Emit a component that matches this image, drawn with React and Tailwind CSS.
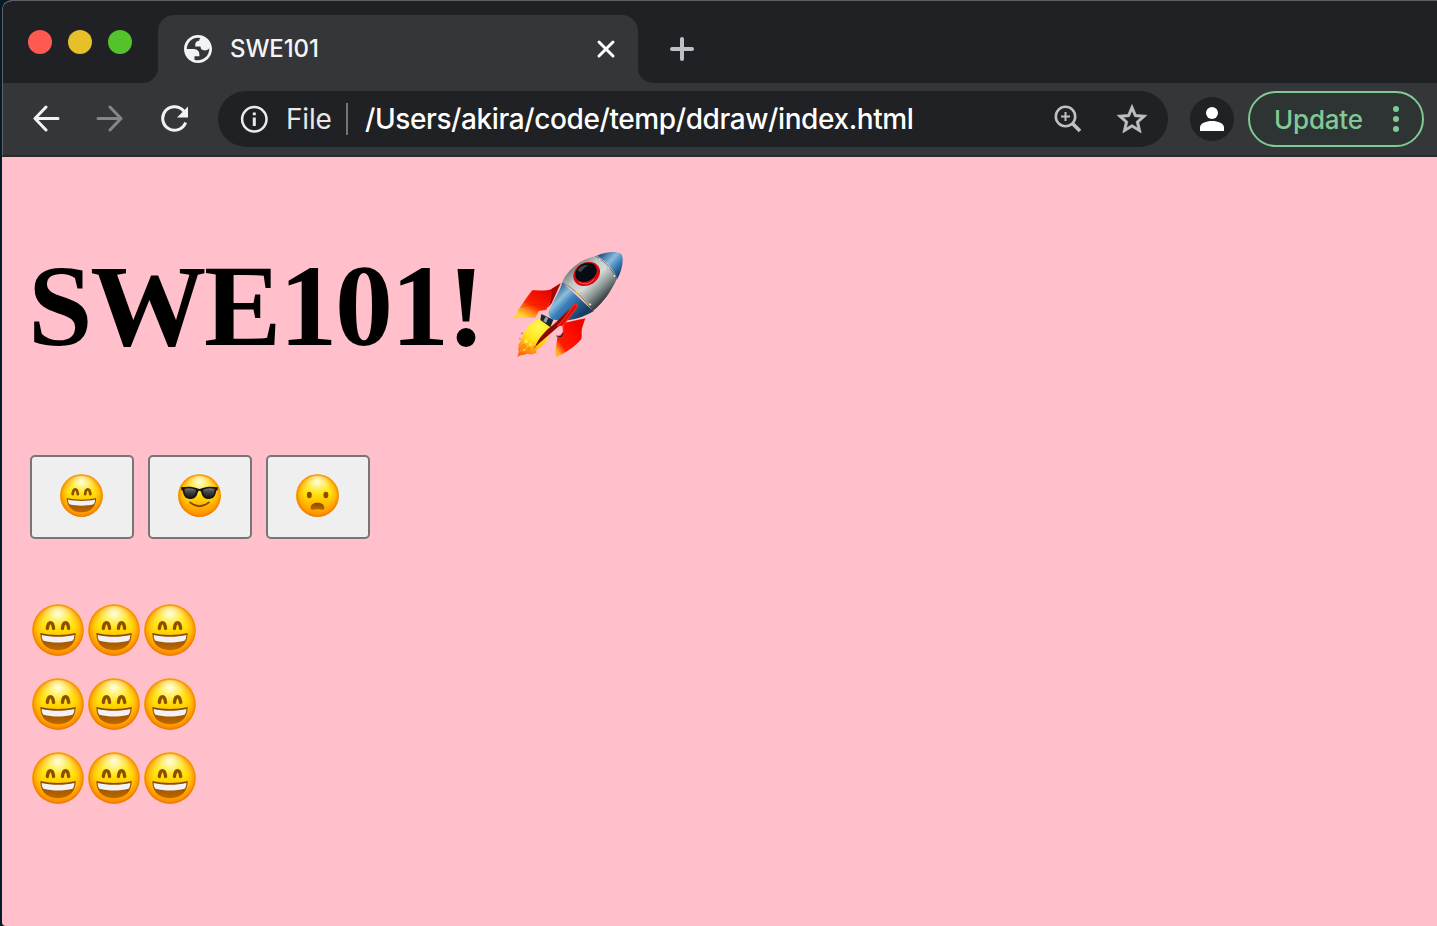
import React from "react";

function GradientDefs() {
  return (
    <svg className="absolute h-0 w-0" aria-hidden="true">
      <defs>
        <linearGradient id="skin" x1="0" y1="0" x2="0" y2="1">
          <stop offset="0" stopColor="#fff06a" />
          <stop offset="0.2" stopColor="#ffec3a" />
          <stop offset="0.45" stopColor="#ffe208" />
          <stop offset="0.75" stopColor="#ffb400" />
          <stop offset="1" stopColor="#ff9100" />
        </linearGradient>
        <radialGradient id="rim" cx="0.5" cy="0.49" r="0.51">
          <stop offset="0.6" stopColor="#ffa000" stopOpacity="0" />
          <stop offset="0.8" stopColor="#ff9a00" stopOpacity="0.45" />
          <stop offset="0.92" stopColor="#f98b00" stopOpacity="0.85" />
          <stop offset="1" stopColor="#e87000" stopOpacity="1" />
        </radialGradient>
        <radialGradient id="shine" cx="0.5" cy="0.16" r="0.34">
          <stop offset="0" stopColor="#fffff0" stopOpacity="0.95" />
          <stop offset="1" stopColor="#fff780" stopOpacity="0" />
        </radialGradient>
        <linearGradient id="mouth" x1="0" y1="0" x2="0" y2="1">
          <stop offset="0" stopColor="#8a4500" />
          <stop offset="1" stopColor="#bd6a00" />
        </linearGradient>
        <linearGradient id="lens" x1="0" y1="0" x2="0" y2="1">
          <stop offset="0" stopColor="#777" />
          <stop offset="0.4" stopColor="#444" />
          <stop offset="1" stopColor="#1b1b1b" />
        </linearGradient>
        <linearGradient id="hull" gradientUnits="userSpaceOnUse" x1="215" y1="85" x2="310" y2="185">
          <stop offset="0" stopColor="#777f82" />
          <stop offset="0.25" stopColor="#c3c9c7" />
          <stop offset="0.5" stopColor="#d5dad6" />
          <stop offset="0.72" stopColor="#929b9a" />
          <stop offset="1" stopColor="#283438" />
        </linearGradient>
        <linearGradient id="blue" gradientUnits="userSpaceOnUse" x1="160" y1="150" x2="240" y2="230">
          <stop offset="0" stopColor="#1e5688" />
          <stop offset="0.3" stopColor="#8ebedd" />
          <stop offset="0.5" stopColor="#3a81bb" />
          <stop offset="1" stopColor="#153d60" />
        </linearGradient>
        <linearGradient id="nose" gradientUnits="userSpaceOnUse" x1="308" y1="40" x2="368" y2="95">
          <stop offset="0" stopColor="#245d94" />
          <stop offset="0.4" stopColor="#8dbbdd" />
          <stop offset="0.65" stopColor="#4188bf" />
          <stop offset="1" stopColor="#183e68" />
        </linearGradient>
        <linearGradient id="finLeft" gradientUnits="userSpaceOnUse" x1="140" y1="145" x2="90" y2="240">
          <stop offset="0" stopColor="#e00500" />
          <stop offset="0.3" stopColor="#f40f00" />
          <stop offset="0.6" stopColor="#ff2600" />
          <stop offset="0.8" stopColor="#ff8a16" />
          <stop offset="1" stopColor="#ffd535" />
        </linearGradient>
        <linearGradient id="finRight" gradientUnits="userSpaceOnUse" x1="240" y1="270" x2="165" y2="325">
          <stop offset="0" stopColor="#f00600" />
          <stop offset="0.3" stopColor="#ff0d00" />
          <stop offset="0.75" stopColor="#ff1c00" />
          <stop offset="1" stopColor="#ffb02c" />
        </linearGradient>
        <radialGradient id="flame" gradientUnits="userSpaceOnUse" cx="115" cy="262" r="90">
          <stop offset="0" stopColor="#fffa50" />
          <stop offset="0.45" stopColor="#ffe51c" />
          <stop offset="0.75" stopColor="#ffae12" />
          <stop offset="1" stopColor="#ff6a0c" />
        </radialGradient>
      </defs>
    </svg>
  );
}

function FaceBase() {
  return (
    <>
      <circle cx="50" cy="50" r="49.500" fill="url(#skin)" />
      <circle cx="50" cy="50" r="49.500" fill="url(#rim)" />
      <circle cx="50" cy="50" r="46" fill="url(#shine)" />
    </>
  );
}

function Grin({ className }) {
  return (
    <svg className={className} viewBox="0 0 100 100" role="img" aria-label="grinning face">
      <FaceBase />
      <path d="M29.500 47C31 32 40 32 41.500 47" fill="none" stroke="#8f4d00" strokeWidth="6.500" strokeLinecap="round" />
      <path d="M58.500 47C60 32 69 32 70.500 47" fill="none" stroke="#8f4d00" strokeWidth="6.500" strokeLinecap="round" />
      <path d="M16 56C35 61 65 61 84 56C84 77 71 89 50 89S16 77 16 56Z" fill="url(#mouth)" />
      <path d="M18.500 59.500C37 64 63 64 81.500 59.500C81.500 64 80.500 68 78 70.500C61 75 39 75 22 70.500C19.500 68 18.500 64 18.500 59.500Z" fill="#f1f1f6" />
    </svg>
  );
}

function Cool({ className }) {
  return (
    <svg className={className} viewBox="0 0 100 100" role="img" aria-label="face with sunglasses">
      <FaceBase />
      <path d="M28 66Q50 84 72 66" fill="none" stroke="#8b4600" strokeWidth="4" strokeLinecap="round" />
      <path d="M7 31C22 29 35 29 46 34Q50 35.500 54 34C65 29 78 29 93 31L92 37L89 39C87 51 83 58 72 58C60 58 56 51 53.500 41Q50 37 46.500 41C44 51 40 58 28 58C17 58 13 51 11 39L8 37Z" fill="#171717" />
      <path d="M15 35Q29 31 42 37C40 49 36 54 28 54C19 54 16 48 15 35Z" fill="url(#lens)" />
      <path d="M85 35Q71 31 58 37C60 49 64 54 72 54C81 54 84 48 85 35Z" fill="url(#lens)" />
    </svg>
  );
}

function Frown({ className }) {
  return (
    <svg className={className} viewBox="0 0 100 100" role="img" aria-label="frowning face with open mouth">
      <FaceBase />
      <ellipse cx="31" cy="49" rx="5.700" ry="7.500" fill="#8b4a00" />
      <ellipse cx="69.500" cy="49" rx="5.700" ry="7.500" fill="#8b4a00" />
      <path d="M34 79C34 63 66 63 66 79C66 86 59 82 50 82S34 86 34 79Z" fill="url(#mouth)" />
    </svg>
  );
}

function Rocket({ className }) {
  return (
    <svg className={className} viewBox="36 33 336 324" role="img" aria-label="rocket">
      <path d="M124 235C104 240 82 256 73 280C66 292 64 304 55 314C60 320 51 327 57 333L52 351L66 344C74 347 80 339 86 342C94 344 102 341 110 338C107 330 112 325 120 323C139 311 150 283 158 257Z" fill="url(#flame)" />
      <g fill="#ff8a16">
        <circle cx="66" cy="280" r="3.500" />
        <circle cx="60" cy="297" r="3" />
        <circle cx="72" cy="318" r="6" />
        <circle cx="87" cy="327" r="6" />
        <circle cx="64" cy="331" r="5" />
        <circle cx="103" cy="323" r="5" />
      </g>
      <g fill="#ffe838">
        <circle cx="78" cy="304" r="6" />
        <circle cx="92" cy="313" r="5" />
        <circle cx="73" cy="330" r="3" />
      </g>
      <path d="M182 130L150 149C132 154 115 149 97 151C80 172 56 207 39 236C58 231 82 235 105 234L117 213L139 209L155 174Z" fill="url(#finLeft)" />
      <path d="M182 130L155 148Q158 172 142 205L155 190Z" fill="#a30500" />
      <path d="M62 202Q88 190 146 197" fill="none" stroke="#a40d00" strokeOpacity="0.5" strokeWidth="1.500" />
      <path d="M256 235L246 265C243 278 247 286 244 297C224 321 195 340 169 351C163 336 170 313 172 292L188 280L191 249Z" fill="url(#finRight)" />
      <path d="M187 127C180 155 155 191 145 217Q145 229 157 238C187 248 238 240 280 214Z" fill="url(#blue)" />
      <path d="M187 125C202 91 238 58 290 47C312 58 339 84 351 115C336 150 311 188 278 214C254 180 225 151 187 125Z" fill="url(#hull)" />
      <path d="M290 47C317 35 350 32 364 42C372 55 368 87 352 117C340 86 318 63 290 47Z" fill="url(#nose)" />
      <path d="M286 49C315 63 337 89 350 118M188 128C225 148 254 179 280 214" fill="none" stroke="#4b524d" strokeWidth="2" />
      <path d="M227 155Q252 173 267 194" fill="none" stroke="#edbd20" strokeWidth="3" />
      <ellipse cx="260" cy="102" rx="42" ry="34" transform="rotate(-31 260 102)" fill="#db0710" />
      <ellipse cx="258" cy="97" rx="34" ry="27" transform="rotate(-31 258 97)" fill="#050d12" />
      <path d="M232 91Q244 74 265 75Q252 82 242 97Z" fill="#3a4548" />
      <path d="M236 126Q261 141 283 117" fill="none" stroke="#ff5656" strokeWidth="3" />
      <g fill="#f3f5ed" stroke="#59605e" strokeWidth="1">
        <circle cx="210" cy="132" r="3.500" />
        <circle cx="243" cy="163" r="3.500" />
        <circle cx="270" cy="193" r="3.500" />
        <circle cx="299" cy="59" r="3.500" />
        <circle cx="325" cy="84" r="3.500" />
        <circle cx="343" cy="108" r="3.500" />
      </g>
      <path d="M124 222L160 239L151 262L121 240Z" fill="#19282e" />
      <path d="M137 230L145 234L138 249L130 243Z" fill="#8ca2a8" />
      <path d="M105 321C116 294 136 271 160 254L209 208L199 239Q155 277 105 321Z" fill="#8e0800" />
      <path d="M172 258C190 243 203 220 218 200Q226 190 232 194Q231 203 219 217L188 257" fill="#d90b08" stroke="#ff251e" strokeWidth="4" />
      <path d="M188 257L191 276L179 289" fill="none" stroke="#ff251e" strokeWidth="3" />
      <path d="M169 288L184 290L190 278" fill="none" stroke="#211f27" strokeWidth="3" />
    </svg>
  );
}

function TitleBar() {
  return (
    <div className="flex h-[82px] items-end border-l border-[#606264] bg-[#202124]">
      <div className="flex h-full w-[144px] shrink-0 gap-4 pl-[25px] pt-[29px]">
        <span className="size-6 rounded-full bg-[#ff5a52]" />
        <span className="size-6 rounded-full bg-[#e6c02a]" />
        <span className="size-6 rounded-full bg-[#53c22b]" />
      </div>
      <svg className="-ml-[4px] size-[15px] shrink-0" viewBox="0 0 15 15">
        <path d="M15 0A15 15 0 0 1 0 15H15Z" fill="#35363a" />
      </svg>
      <div className="flex h-[68px] w-[480px] shrink-0 items-center rounded-t-[16px] bg-[#35363a] pl-[26px] pr-[22px]">
        <svg className="size-7 shrink-0" viewBox="2 2 20 20">
          <path fillRule="evenodd" d="M12 2C6.480 2 2 6.480 2 12s4.480 10 10 10 10-4.480 10-10S17.520 2 12 2zM4 12h4.400c3.407.022 4.922 1.730 4.543 5.127H9.488v2.470a8.004 8.004 0 0 0 10.498-8.083C19.327 12.504 18.332 13 17 13c-2.137 0-3.206-.916-3.206-2.750h-3.748c-.274-2.728.683-4.092 2.870-4.092 0-.975.327-1.597.811-1.970A8.004 8.004 0 0 0 4 12z" fill="#f1f3f4" />
        </svg>
        <span className="ml-[18px] whitespace-nowrap text-[24px] font-medium leading-[30px] tracking-[-0.1px] text-[#f4f5f6]">SWE101</span>
        <svg className="ml-auto size-5 shrink-0" viewBox="0 0 20 20">
          <path d="M3 3L17 17M17 3L3 17" fill="none" stroke="#fff" strokeWidth="3" strokeLinecap="round" />
        </svg>
      </div>
      <svg className="size-[15px] shrink-0" viewBox="0 0 15 15">
        <path d="M0 0A15 15 0 0 0 15 15H0Z" fill="#35363a" />
      </svg>
      <svg className="mb-[22px] ml-[17px] size-6 shrink-0" viewBox="0 0 24 24">
        <path d="M12 2V22M2 12H22" stroke="#bdc1c6" strokeWidth="4" strokeLinecap="round" />
      </svg>
    </div>
  );
}

function Toolbar() {
  return (
    <div className="flex h-[74px] items-center border-b-2 border-l border-b-[#292a2b] border-l-[#606264] bg-[#35363a]">
      <svg className="ml-[29px] size-[28px] shrink-0" viewBox="0 0 28 28" fill="none" stroke="#f1f3f4" strokeWidth="3" strokeLinecap="round">
        <path d="M26 13.500H3M14 2L3 13.500L14 25" strokeLinejoin="round" />
      </svg>
      <svg className="ml-9 size-[28px] shrink-0" viewBox="0 0 28 28" fill="none" stroke="#858689" strokeWidth="3" strokeLinecap="round">
        <path d="M2 13.500H25M14 2L25 13.500L14 25" strokeLinejoin="round" />
      </svg>
      <svg className="ml-9 size-[28px] shrink-0" viewBox="0 0 28 28">
        <path d="M24 6.200A11.800 11.800 0 1 0 25.400 17" transform="translate(0.200 0.500)" fill="none" stroke="#f1f3f4" strokeWidth="3" />
        <path d="M28 1.500V12.500H17Z" fill="#f1f3f4" />
      </svg>
      <div className="ml-[30px] flex h-[56px] w-[950px] shrink-0 items-center rounded-full bg-[#202124] pl-[22px] pr-[20px]">
        <svg className="size-[28px] shrink-0" viewBox="0 0 28 28">
          <circle cx="14.300" cy="14.300" r="12.200" fill="none" stroke="#e8eaed" strokeWidth="2.500" />
          <path d="M14.300 12.500V21M14.300 7.500V10.300" stroke="#e8eaed" strokeWidth="3" />
        </svg>
        <span className="ml-[18px] w-[60px] shrink-0 text-[28px] leading-[34px] tracking-[-0.2px] text-[#e8e8e8]">File</span>
        <span className="h-8 w-[2px] shrink-0 bg-[#737477]" />
        <span className="ml-[17px] whitespace-nowrap text-[28px] font-medium leading-[34px] tracking-[-0.4px] text-white">/Users/akira/code/temp/ddraw/index.html</span>
        <svg className="ml-auto size-[28px] shrink-0" viewBox="0 0 28 28" fill="none" stroke="#bfc0c1">
          <circle cx="11.500" cy="11.500" r="9.700" strokeWidth="2.600" />
          <path d="M18 18L26 26" strokeWidth="3.800" />
          <path d="M11.500 7V16M7 11.500H16" strokeWidth="2" />
        </svg>
        <svg className="ml-[34px] size-8 shrink-0" viewBox="1.300 1 21.400 21.400" fill="#bfc0c1" stroke="#bfc0c1" strokeWidth="0.400">
          <path d="m22 9.240-7.190-.62L12 2 9.190 8.630 2 9.240l5.460 4.730L5.820 21 12 17.270 18.180 21l-1.630-7.030zM12 15.400l-3.760 2.270 1-4.280-3.320-2.880 4.380-.38L12 6.100l1.710 4.040 4.380.38-3.320 2.880 1 4.280z" />
        </svg>
      </div>
      <div className="ml-[22px] flex size-11 shrink-0 items-center justify-center rounded-full bg-[#202124]">
        <svg className="size-6" viewBox="0 0 24 24" fill="#fff">
          <circle cx="12" cy="6" r="6" />
          <path d="M0 24V20.500C0 11.800 24 11.800 24 20.500V24Z" />
        </svg>
      </div>
      <div className="ml-[14px] flex h-[56px] w-[176px] shrink-0 items-center rounded-full border-2 border-[#81c995] bg-[#2e3333] pl-6">
        <span className="w-[119px] shrink-0 pt-px text-[26px] font-medium leading-[34px] tracking-[-0.200px] text-[#81c995]">Update</span>
        <span className="flex flex-col gap-1">
          <span className="size-[6px] rounded-full bg-[#81c995]" />
          <span className="size-[6px] rounded-full bg-[#81c995]" />
          <span className="size-[6px] rounded-full bg-[#81c995]" />
        </span>
      </div>
    </div>
  );
}

const moods = [Grin, Cool, Frown];
const cells = Array.from({ length: 9 }, (_, i) => i);

export default function App() {
  return (
    <div className="h-[926px] w-[1437px] overflow-hidden bg-[#061b26] font-['Inter',sans-serif]">
      <GradientDefs />
      <div className="ml-[2px] flex h-full flex-col overflow-hidden rounded-tl-[10px] rounded-bl-[4px] border-t border-[#606264] bg-[#ffc0cb]">
        <TitleBar />
        <Toolbar />
        <main className="flex-1 pl-7 pt-[85px]">
          <h1 className="flex h-[128px] items-start font-['Liberation_Serif',serif] text-[116px] font-bold leading-[128px] tracking-[-2.2px] text-black">
            <span className="-ml-[2px] w-[484px] whitespace-nowrap">SWE101!</span>
            <Rocket className="mt-[9px] h-[108px] w-[112px] shrink-0" />
          </h1>
          <div className="mt-[85px] flex gap-[14px]">
            {moods.map((Face, i) => (
              <button key={i} className="flex h-[84px] w-[104px] items-center justify-center rounded-[5px] border-2 border-[#767676] bg-[#efefef] pb-[3px] pr-px">
                <Face className="size-[43px]" />
              </button>
            ))}
          </div>
          <div className="ml-[2px] mt-[65px] grid w-[168px] grid-cols-3 gap-y-[22px]">
            {cells.map((i) => (
              <Grin key={i} className="size-[52px]" />
            ))}
          </div>
        </main>
      </div>
    </div>
  );
}
